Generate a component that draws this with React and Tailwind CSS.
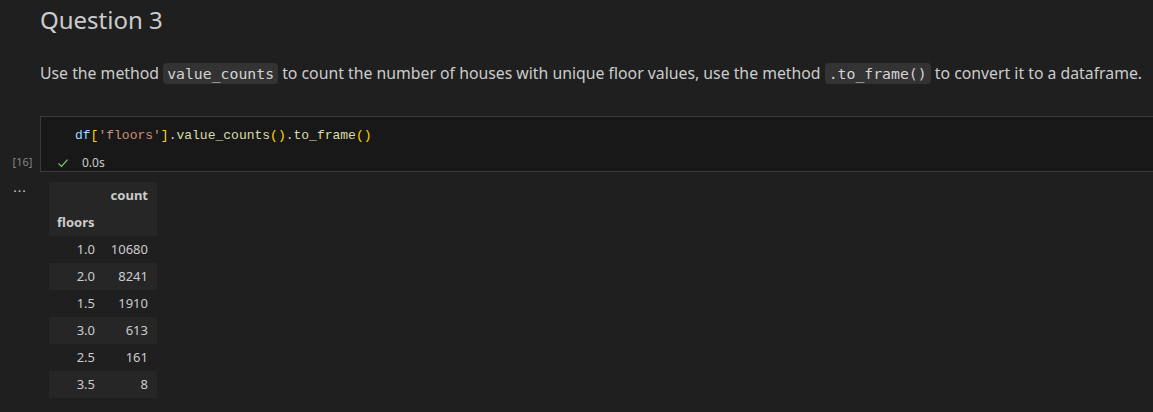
export default function App() {
    const rows = [
        ["1.0", "10680"],
        ["2.0", "8241"],
        ["1.5", "1910"],
        ["3.0", "613"],
        ["2.5", "161"],
        ["3.5", "8"],
    ]

    return (
        <div className="w-[1153px] h-[412px] overflow-hidden bg-[#1f1f1f] text-[#cccccc] font-['Segoe_UI','Noto_Sans',sans-serif]">
            {/* Markdown cell */}
            <div className="pl-[40px] pt-[4px]">
                <h3 className="text-[24px] leading-[32px] font-normal">Question 3</h3>
                <p className="mt-[25px] text-[15.8px] leading-[24px] whitespace-nowrap">
                    Use the method{" "}
                    <code className="px-[4px] py-[2px] rounded-[4px] bg-[#333333] text-[#d4d4d4] text-[14.8px] font-['DejaVu_Sans_Mono',monospace]">value_counts</code>{" "}
                    to count the number of houses with unique floor values, use the method{" "}
                    <code className="px-[4px] py-[2px] rounded-[4px] bg-[#333333] text-[#d4d4d4] text-[14.8px] font-['DejaVu_Sans_Mono',monospace]">.to_frame()</code>{" "}
                    to convert it to a dataframe.
                </p>
            </div>

            {/* Code cell */}
            <div className="flex mt-[30px]">
                <div className="w-[40px] flex items-end justify-center pb-[2px] pl-[5px]">
                    <span className="text-[11px] leading-[16px] text-[#858585]">[16]</span>
                </div>
                <div className="flex-1 bg-[#181818] border-y border-l border-[#3a3a3a] pt-[10px]">
                    <div className="pl-[34px] h-[18px] text-[13px] leading-[18px] font-['Liberation_Mono',monospace] whitespace-pre">
                        <span className="text-[#9cdcfe]">df</span>
                        <span className="text-[#ffd700]">[</span>
                        <span className="text-[#ce9178]">'floors'</span>
                        <span className="text-[#ffd700]">]</span>
                        <span className="text-[#d4d4d4]">.</span>
                        <span className="text-[#dcdcaa]">value_counts</span>
                        <span className="text-[#ffd700]">()</span>
                        <span className="text-[#d4d4d4]">.</span>
                        <span className="text-[#dcdcaa]">to_frame</span>
                        <span className="text-[#ffd700]">()</span>
                    </div>
                    <div className="flex items-center h-[16px] mt-[10px] pl-[16px] text-[12px]">
                        <svg width="12" height="12" viewBox="0 0 16 16" fill="none" stroke="#89d185" strokeWidth="1.4">
                            <path d="M2 8.5 L6 12.5 L14 3.5" />
                        </svg>
                        <span className="ml-[13px] text-[#cccccc]">0.0s</span>
                    </div>
                </div>
            </div>

            {/* Output */}
            <div className="flex mt-[1px]">
                <div className="w-[40px] flex justify-center pt-[6px]">
                    <span className="text-[13px] leading-[16px] text-[#cccccc] tracking-[1px]">...</span>
                </div>
                <table className="ml-[9px] mt-[9px] text-[13px] leading-[27px] border-collapse">
                    <thead>
                        <tr className="bg-[#262626]">
                            <th className="w-[55px] h-[27px]"></th>
                            <th className="w-[53px] pr-[9px] text-right font-bold">count</th>
                        </tr>
                        <tr className="bg-[#262626]">
                            <th className="pl-[8px] h-[27px] text-left font-bold">floors</th>
                            <th></th>
                        </tr>
                    </thead>
                    <tbody>
                        {rows.map(([f, c], i) => (
                            <tr key={f} className={i % 2 === 1 ? "bg-[#262626]" : ""}>
                                <td className="h-[27px] pr-[9px] text-right">{f}</td>
                                <td className="pr-[9px] text-right">{c}</td>
                            </tr>
                        ))}
                    </tbody>
                </table>
            </div>
        </div>
    )
}
